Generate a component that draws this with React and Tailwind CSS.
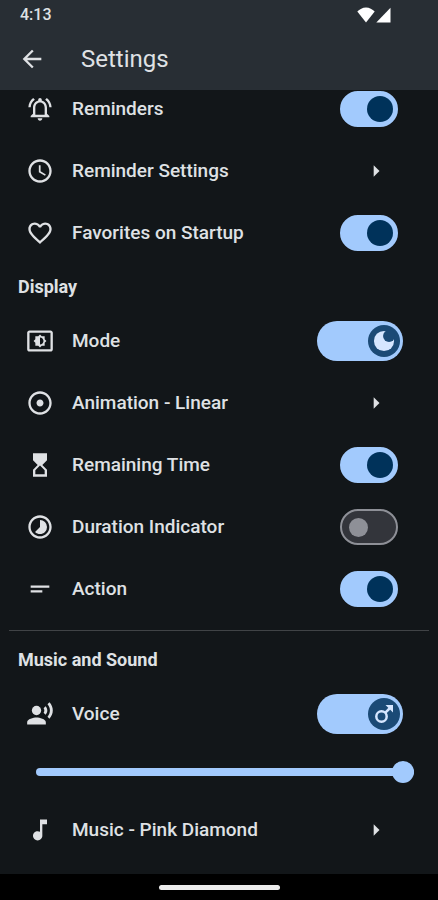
import { useState } from 'react';
import {
  MdAccessTime,
  MdAdjust,
  MdArrowBack,
  MdArrowRight,
  MdFavoriteBorder,
  MdHourglassTop,
  MdMusicNote,
  MdOutlineNotificationsActive,
  MdRecordVoiceOver,
  MdSettingsBrightness,
  MdShortText,
  MdTimelapse,
} from 'react-icons/md';

const MoonIcon = ({ className }) => (
  <svg className={className} viewBox="0 0 24 24" aria-hidden="true">
    <circle cx="12" cy="12" r="11" fill="#d6e6ff" />
    <circle cx="17.500" cy="6.500" r="6.500" fill="#1b4a76" />
  </svg>
);

const MaleIcon = ({ className }) => (
  <svg className={className} viewBox="0 0 24 24" fill="none" stroke="currentColor" strokeWidth="2.500" aria-hidden="true">
    <circle cx="9.500" cy="14.500" r="5.200" />
    <path d="M13.200 10.800 18 6" />
    <path d="M13.500 3H21v7.500z" fill="currentColor" stroke="none" />
  </svg>
);

const StatusBar = () => (
  <div className="flex h-7 items-center justify-between pt-0.5 pr-[47px] pl-5">
    <span className="text-base font-medium">4:13</span>
    <div className="flex items-center gap-px">
      <svg className="h-4 w-[18px]" viewBox="0 0 18 16" fill="#fff" aria-hidden="true">
        <path d="M9 15.5 0.3 4.6C2.6 2.200 5.600 0.500 9 0.500s6.400 1.700 8.700 4.100z" />
      </svg>
      <svg className="h-4 w-[15px]" viewBox="0 0 15 16" fill="#fff" aria-hidden="true">
        <path d="M0.300 15.500 14.500 0.800v14.700z" />
      </svg>
    </div>
  </div>
);

const SectionTitle = ({ children }) => (
  <h2 className="flex h-[46px] items-center px-[18px] text-lg font-bold">{children}</h2>
);

const LinkRow = ({ icon: Icon, label }) => (
  <button type="button" className="flex h-[62px] w-full items-center pr-12 pl-[26px] text-left">
    <Icon className="mr-[18px] size-7 shrink-0" />
    <span className="flex-1 text-[19px] font-medium">{label}</span>
    <MdArrowRight className="size-7 shrink-0" />
  </button>
);

const SwitchRow = ({ id, icon: Icon, label, checked, onChange }) => (
  <div className="flex h-[62px] items-center pr-10 pl-[26px]">
    <Icon className="mr-[18px] size-7 shrink-0" />
    <label htmlFor={id} className="flex-1 text-[19px] font-medium">{label}</label>
    <input
      id={id}
      type="checkbox"
      role="switch"
      checked={checked}
      onChange={onChange}
      className="flex h-9 w-[58px] shrink-0 cursor-pointer appearance-none items-center rounded-full border-2 border-[#8e9097] bg-[#33353b] px-[7px] before:size-[19px] before:rounded-full before:bg-[#8e9097] checked:justify-end checked:border-[#a2cafd] checked:bg-[#a2cafd] checked:px-[3px] checked:before:size-[26px] checked:before:bg-[#00325a]"
    />
  </div>
);

// wide switch with an icon drawn on the thumb
const IconSwitchRow = ({ id, icon: Icon, label, thumb, checked, onChange }) => (
  <div className="flex h-[62px] items-center pr-[35px] pl-[26px]">
    <Icon className="mr-[18px] size-7 shrink-0" />
    <label htmlFor={id} className="flex-1 text-[19px] font-medium">{label}</label>
    <div className="relative h-10 w-[86px] shrink-0">
      <input
        id={id}
        type="checkbox"
        role="switch"
        checked={checked}
        onChange={onChange}
        className="block h-10 w-[86px] cursor-pointer appearance-none rounded-full bg-[#33353b] checked:bg-[#a2cafd]"
      />
      <span
        className={`pointer-events-none absolute top-1 flex size-8 items-center justify-center rounded-full bg-[#1b4a76] text-[#d6e6ff] ${
          checked ? 'right-[3px]' : 'left-[3px]'
        }`}
      >
        {thumb}
      </span>
    </div>
  </div>
);

const App = () => {
  const [settings, setSettings] = useState({
    reminders: true,
    favorites: true,
    mode: true,
    remaining: true,
    duration: false,
    action: true,
    voice: true,
  });
  const [volume, setVolume] = useState(100);

  const bind = (key) => ({
    id: key,
    checked: settings[key],
    onChange: () => setSettings({ ...settings, [key]: !settings[key] }),
  });

  return (
    <div className="flex min-h-screen flex-col bg-[#121619] font-[Roboto,sans-serif] text-[#dfe1e4]">
      <header className="relative z-10 bg-[#282e34]">
        <StatusBar />
        <div className="flex h-[62px] items-center px-[18px]">
          <button type="button" aria-label="Back" className="mr-[35px]">
            <MdArrowBack className="size-7" />
          </button>
          <h1 className="text-2xl">Settings</h1>
        </div>
      </header>

      {/* list is scrolled slightly under the header */}
      <main className="-mt-3 flex-1">
        <section>
          <SwitchRow icon={MdOutlineNotificationsActive} label="Reminders" {...bind('reminders')} />
          <LinkRow icon={MdAccessTime} label="Reminder Settings" />
          <SwitchRow icon={MdFavoriteBorder} label="Favorites on Startup" {...bind('favorites')} />
        </section>

        <section>
          <SectionTitle>Display</SectionTitle>
          <IconSwitchRow
            icon={MdSettingsBrightness}
            label="Mode"
            thumb={<MoonIcon className="size-[22px]" />}
            {...bind('mode')}
          />
          <LinkRow icon={MdAdjust} label="Animation - Linear" />
          <SwitchRow icon={MdHourglassTop} label="Remaining Time" {...bind('remaining')} />
          <SwitchRow icon={MdTimelapse} label="Duration Indicator" {...bind('duration')} />
          <SwitchRow icon={MdShortText} label="Action" {...bind('action')} />
        </section>

        <hr className="mx-[9px] mt-2.5 mb-1.5 border-[#404346]" />

        <section>
          <SectionTitle>Music and Sound</SectionTitle>
          <IconSwitchRow
            icon={MdRecordVoiceOver}
            label="Voice"
            thumb={<MaleIcon className="size-6" />}
            {...bind('voice')}
          />
          <div className="flex h-[54px] items-center pr-6 pl-9">
            <input
              type="range"
              aria-label="Voice volume"
              min="0"
              max="100"
              value={volume}
              onChange={(e) => setVolume(Number(e.target.value))}
              className="h-[22px] w-full cursor-pointer appearance-none bg-transparent [&::-webkit-slider-runnable-track]:h-2 [&::-webkit-slider-runnable-track]:rounded-full [&::-webkit-slider-runnable-track]:bg-[#a2cafd] [&::-webkit-slider-thumb]:-mt-[7px] [&::-webkit-slider-thumb]:size-[22px] [&::-webkit-slider-thumb]:appearance-none [&::-webkit-slider-thumb]:rounded-full [&::-webkit-slider-thumb]:bg-[#a2cafd]"
            />
          </div>
          <LinkRow icon={MdMusicNote} label="Music - Pink Diamond" />
        </section>
      </main>

      <footer className="flex h-[26px] items-center justify-center bg-black">
        <div className="h-[5px] w-[121px] rounded-full bg-[#ececec]" />
      </footer>
    </div>
  );
};

export default App;
